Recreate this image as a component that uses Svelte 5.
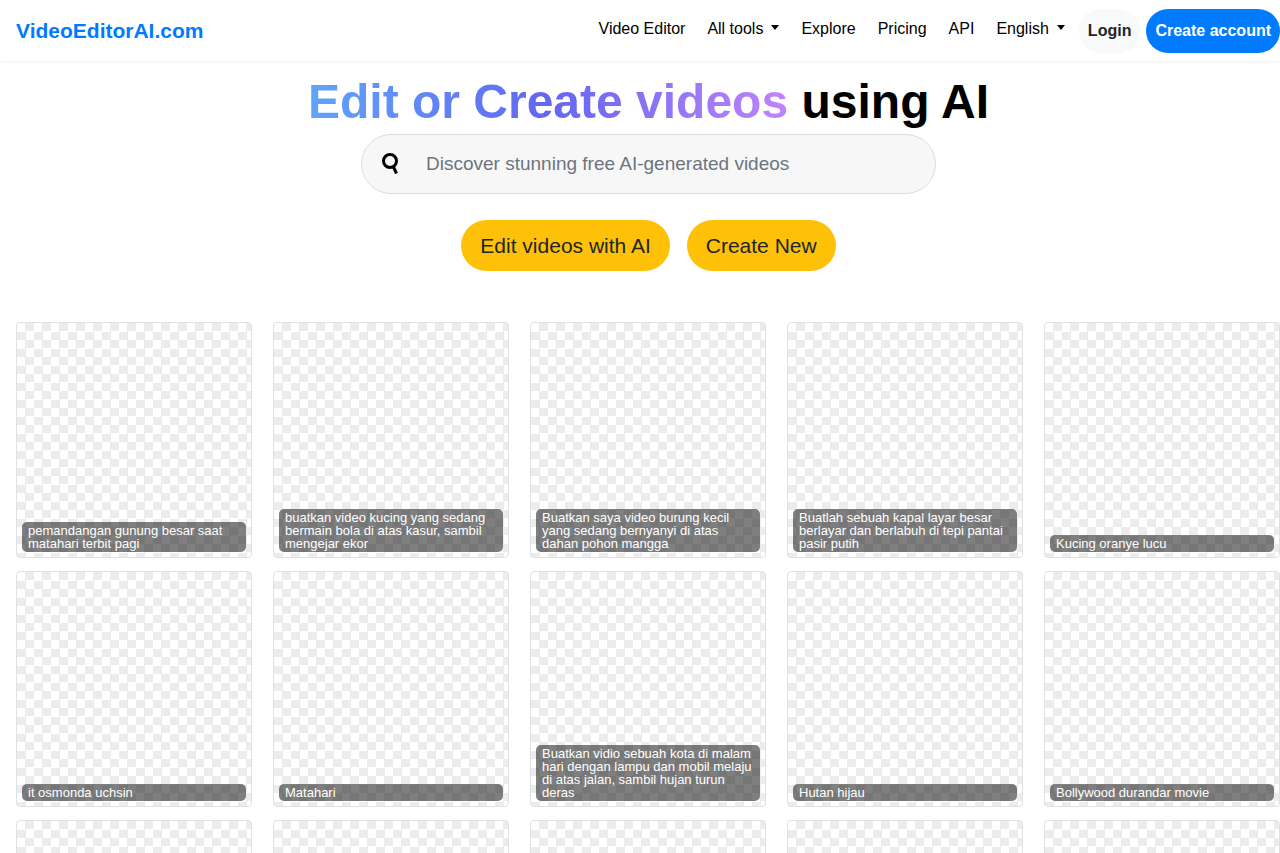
<script lang="ts">
	type NavItem = {
		label: string;
		href: string;
		dropdown?: boolean;
	};

	const navItems: NavItem[] = [
		{ label: 'Video Editor', href: '#editor' },
		{ label: 'All tools', href: '#tools', dropdown: true },
		{ label: 'Explore', href: '#explore' },
		{ label: 'Pricing', href: '#pricing' },
		{ label: 'API', href: '#api' },
		{ label: 'English', href: '#language', dropdown: true }
	];

	const videos = [
		'pemandangan gunung besar saat matahari terbit pagi',
		'buatkan video kucing yang sedang bermain bola di atas kasur, sambil mengejar ekor',
		'Buatkan saya video burung kecil yang sedang bernyanyi di atas dahan pohon mangga',
		'Buatlah sebuah kapal layar besar berlayar dan berlabuh di tepi pantai pasir putih',
		'Kucing oranye lucu',
		'it osmonda uchsin',
		'Matahari',
		'Buatkan vidio sebuah kota di malam hari dengan lampu dan mobil melaju di atas jalan, sambil hujan turun deras',
		'Hutan hijau',
		'Bollywood durandar movie',
		'',
		'',
		'',
		'',
		''
	];

	let query = '';
</script>

<header>
	<a class="brand" href="#home">VideoEditorAI.com</a>
	<nav>
		{#each navItems as item}
			<a class="nav-link" class:dropdown={item.dropdown} href={item.href}>{item.label}</a>
		{/each}
		<button type="button" class="pill login">Login</button>
		<button type="button" class="pill signup">Create account</button>
	</nav>
</header>

<main>
	<section class="hero">
		<h1><span>Edit or Create videos</span> using AI</h1>
		<form class="search" on:submit|preventDefault>
			<svg viewBox="0 0 20 24" aria-hidden="true">
				<circle cx="9" cy="9" r="6.5" />
				<path d="M12 14 L15.5 21.5" />
			</svg>
			<input
				type="search"
				aria-label="Search videos"
				placeholder="Discover stunning free AI-generated videos"
				bind:value={query}
			/>
		</form>
		<div class="actions">
			<button type="button">Edit videos with AI</button>
			<button type="button">Create New</button>
		</div>
	</section>

	<section class="gallery" aria-label="Videos">
		{#each videos as title}
			<a class="card" href="#video" aria-label={title || 'Video'}>
				{#if title}<span>{title}</span>{/if}
			</a>
		{/each}
	</section>
</main>

<style>
	:global(body) {
		margin: 0;
		background: #fff;
		color: #000;
		font-family: 'Liberation Sans', Arial, sans-serif;
	}

	:global(#app) {
		height: 100vh;
		overflow: hidden;
	}

	a {
		text-decoration: none;
	}

	button,
	input {
		font-family: inherit;
	}

	button {
		border: 0;
		cursor: pointer;
	}

	header {
		display: flex;
		align-items: center;
		justify-content: space-between;
		box-sizing: border-box;
		height: 61px;
		padding-left: 16px;
		box-shadow: 0 1px 2px rgba(0, 0, 0, 0.06);
	}

	.brand {
		color: #007bff;
		font-size: 21px;
		font-weight: 700;
	}

	nav {
		display: flex;
		align-items: center;
	}

	.nav-link {
		margin-right: 22px;
		padding-bottom: 4px;
		color: #000;
		font-size: 16px;
		line-height: 24px;
	}

	.nav-link:last-of-type {
		margin-right: 14px;
	}

	.dropdown::after {
		display: inline-block;
		margin-left: 8px;
		vertical-align: 4px;
		border-top: 5px solid #000;
		border-right: 4px solid transparent;
		border-left: 4px solid transparent;
		content: '';
	}

	.pill {
		height: 44px;
		padding: 0 9px;
		border-radius: 22px;
		font-size: 16px;
		font-weight: 700;
		white-space: nowrap;
	}

	.login {
		margin-right: 6px;
		background: #f8f9fa;
		color: #212529;
	}

	.signup {
		background: #007bff;
		color: #fff;
	}

	.hero {
		display: flex;
		flex-direction: column;
		align-items: center;
		padding: 12px 0 51px 17px;
	}

	h1 {
		margin: 0;
		padding-bottom: 3px;
		font-size: 48px;
		line-height: 58px;
	}

	h1 span {
		background: linear-gradient(90deg, #60a5fa, #6366f1 50%, #c084fc);
		background-clip: text;
		color: transparent;
	}

	.search {
		display: flex;
		align-items: center;
		box-sizing: border-box;
		width: 575px;
		height: 60px;
		padding: 0 19px;
		border: 1px solid #ddd;
		border-radius: 30px;
		background: #f7f7f7;
	}

	.search svg {
		flex: none;
		width: 20px;
		height: 24px;
		margin-right: 25px;
		fill: none;
		stroke: #000;
		stroke-width: 3;
	}

	.search input {
		flex: 1;
		padding: 0;
		border: 0;
		outline: 0;
		background: none;
		font-size: 19px;
	}

	.search input::placeholder {
		color: #6c757d;
	}

	.actions {
		display: flex;
		gap: 17px;
		margin-top: 26px;
	}

	.actions button {
		height: 51px;
		padding: 0 19px;
		border-radius: 26px;
		background: #ffc107;
		color: #212529;
		font-size: 21px;
	}

	.gallery {
		display: grid;
		grid-template-columns: repeat(5, 1fr);
		gap: 13px 21px;
		padding-left: 16px;
	}

	.card {
		display: flex;
		align-items: flex-end;
		box-sizing: border-box;
		aspect-ratio: 1;
		padding: 5px;
		border: 1px solid #dee2e6;
		border-radius: 4px;
		background: repeating-conic-gradient(#ececec 0% 25%, #fff 0% 50%) 0 0 / 17px 17px;
	}

	.card span {
		flex: 1;
		padding: 2px 6px;
		border-radius: 5px;
		background: rgba(0, 0, 0, 0.5);
		color: #fff;
		font-size: 13px;
		line-height: 13px;
	}
</style>
